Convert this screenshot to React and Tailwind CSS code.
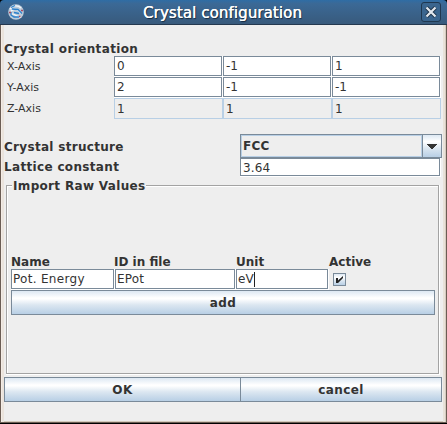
const BTN =
  'bg-[linear-gradient(to_bottom,#dde8f3_0%,#ffffff_30%,#ffffff_34%,#dce7f1_60%,#b8cfe5_100%)] border border-[#7a8a99]';

function Field({ value, className = '', textClass = '', caret = false }) {
  return (
    <div className={`border-r border-b border-white ${className}`}>
      <div className="flex h-full items-center border border-[#7a8a99] bg-white pl-[2px]">
        <span className={`leading-[14px] ${textClass}`}>{value}</span>
        {caret && <span className="h-[15px] w-px bg-[#222]" />}
      </div>
    </div>
  );
}

function Disabled({ value }) {
  return (
    <div className="flex h-[21px] w-[109px] items-center border border-[#b8cfe5] pl-[2px]">
      <span className="leading-[14px]">{value}</span>
    </div>
  );
}

function Axis({ name, values, disabled }) {
  return (
    <div className="flex h-[21px]">
      <span className="w-[107px] text-[11px] leading-[21px]">{name}</span>
      {values.map((v, i) =>
        disabled ? <Disabled key={i} value={v} /> : <Field key={i} value={v} className="h-[21px] w-[109px]" />
      )}
    </div>
  );
}

function Logo() {
  return (
    <svg className="mt-[4px] ml-[8px] h-4 w-4" viewBox="0 0 16 16">
      <circle cx="8" cy="8" r="7.8" fill="#bccbd9" />
      <path d="M2 5C5 1 10 1 13 4M3 7c3-3 7-2 10 2M3 10c4-1 6 4 10 3" fill="none" stroke="#f4f7fa" strokeWidth="1.4" />
      <path d="M3 3.5l4-2M4 5l6 .5 4 4M3 8v3l3 2h5M6 8.500l5 1" fill="none" stroke="#2b80cc" strokeWidth="1.3" />
      <path d="M1 8.500h2M13 6.500h2M11 12.500h1.500" stroke="#a94a62" strokeWidth="1.6" />
    </svg>
  );
}

export default function App() {
  return (
    <div className="flex h-[424px] w-[447px] flex-col overflow-hidden bg-black font-['DejaVu_Sans',sans-serif] text-[12px] text-[#333]">
      <header className="flex h-[25px] shrink-0 rounded-t-[4px] border-b border-[#24384f] bg-[linear-gradient(to_bottom,#2f6da5,#3b6996_15%,#385a7c)]">
        <Logo />
        <h1 className="ml-[119px] w-[188px] text-[15px] leading-[27px] tracking-[0.1px] whitespace-nowrap text-white [text-shadow:0.3px_0_0_#fff,1px_1px_1px_#14263a]">
          Crystal configuration
        </h1>
        <div className="mt-[2px] ml-[90px] flex h-5 w-5 items-center justify-center rounded-[3px] border border-[#1f3850] bg-[#3a658e]">
          <svg className="h-3 w-3" viewBox="0 0 12 12">
            <path d="M1.5 1.5l9 9M10.5 1.5l-9 9" stroke="#20364c" strokeWidth="4" />
            <path d="M1.5 1.5l9 9M10.5 1.5l-9 9" stroke="#e3e9ef" strokeWidth="2.2" />
          </svg>
        </div>
      </header>

      <main className="flex h-[398px] flex-col border-r border-b border-l border-[#6b5d54] bg-[#eee] shadow-[inset_1px_0_#f4ece5,inset_3px_0_#eae3dc,inset_-1px_0_#d5cbc0,inset_-3px_0_#e8e2d9,inset_0_-1px_#d3cabc]">
        <div className="mt-[15px] ml-[3px] h-[16px] font-bold">
          <span className="block leading-[18px] tracking-[0.37px]">Crystal orientation</span>
        </div>
        <div className="ml-[6px]">
          <Axis name="X-Axis" values={['0', '-1', '1']} />
          <Axis name="Y-Axis" values={['2', '-1', '-1']} />
          <Axis name="Z-Axis" values={['1', '1', '1']} disabled />
        </div>

        <div className="mt-[15px] ml-[3px] flex h-[24px]">
          <span className="w-[236px] leading-[26px] font-bold tracking-[0.3px]">Crystal structure</span>
          <div className="flex h-[24px] w-[202px] border border-[#7a8a99]">
            <div className="flex flex-1 items-center border border-[#b8cfe5] pl-[1px] font-bold">
              <span className="leading-[14px] tracking-[0.3px]">FCC</span>
            </div>
            <div className="flex w-[19px] items-center justify-center border-l border-[#7a8a99] bg-[linear-gradient(to_bottom,#dde8f3_0%,#ffffff_30%,#dce7f1_60%,#b8cfe5_100%)]">
              <svg className="h-[5px] w-[10px]" viewBox="0 0 10 5" shapeRendering="crispEdges">
                <path d="M0 0h10v1H0zM1 1h8v1H1zM2 2h6v1H2zM3 3h4v1H3zM4 4h2v1H4z" fill="#333" />
              </svg>
            </div>
          </div>
        </div>
        <div className="ml-[3px] flex h-[19px]">
          <span className="w-[236px] leading-[19px] font-bold tracking-[0.33px]">Lattice constant</span>
          <Field value="3.64" className="h-[19px] w-[201px]" textClass="tracking-[0.15px] leading-[16px] pt-px" />
        </div>

        <fieldset className="mt-[8px] ml-[5px] h-[190px] w-[434px] border-r border-b border-white">
          <div className="h-[189px] w-[433px] border border-[#a3a3a3] shadow-[inset_1px_1px_white]">
            <div className="-mt-[8px] ml-[5px] flex h-[16px] w-[134px] bg-[#eee] px-[1px] font-bold">
              <span className="leading-[16px] tracking-[0.33px] whitespace-nowrap">Import Raw Values</span>
            </div>
            <div className="mt-[61px] ml-[4px] flex h-[14px] font-bold">
              <span className="w-[103px] leading-[14px]">Name</span>
              <span className="w-[122px] leading-[14px]">ID in file</span>
              <span className="w-[93px] leading-[14px]">Unit</span>
              <span className="leading-[14px]">Active</span>
            </div>
            <div className="ml-[4px] flex h-[21px]">
              <Field value="Pot. Energy" className="h-[21px] w-[104px]" textClass="-ml-px tracking-[0.3px]" />
              <Field value="EPot" className="h-[21px] w-[121px]" textClass="-ml-px tracking-[0.2px]" />
              <Field value="eV" className="h-[21px] w-[93px]" textClass="-ml-px" caret />
              <div className={`mt-[4px] ml-[4px] h-[13px] w-[13px] ${BTN}`}>
                <svg className="h-[11px] w-[11px]" viewBox="0 0 11 11">
                  <path d="M2 4h2v2.500L9 2v2L4 9H2z" fill="#222" />
                </svg>
              </div>
            </div>
            <button className={`ml-[4px] block h-[25px] w-[424px] font-bold ${BTN}`}>
              <span className="block leading-[22px] tracking-[0.4px]">add</span>
            </button>
          </div>
        </fieldset>

        <div className="mt-[2px] ml-[3px] flex">
          <button className={`h-[25px] w-[236px] border-r-0 font-bold ${BTN}`}>
            <span className="block pt-px leading-[23px] tracking-[0.6px]">OK</span>
          </button>
          <button className={`h-[25px] w-[202px] font-bold ${BTN}`}>
            <span className="block pt-px leading-[23px] tracking-[0.4px]">cancel</span>
          </button>
        </div>
      </main>
    </div>
  );
}
